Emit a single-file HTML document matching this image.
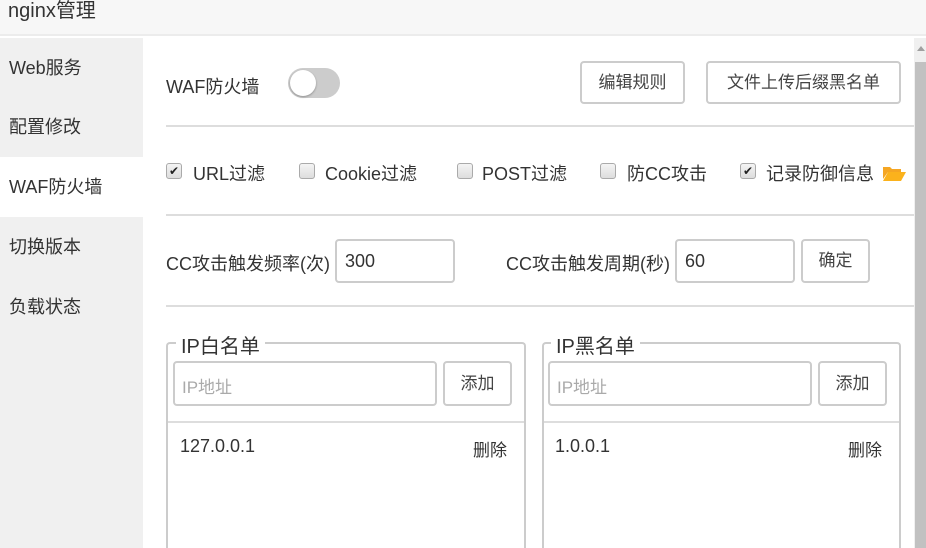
<!DOCTYPE html>
<html style="overflow:hidden;width:926px;height:548px"><head><meta charset="utf-8"><style>
*{margin:0;padding:0;box-sizing:border-box}
body{width:926px;height:548px;overflow:hidden;background:#fff;font-family:"Liberation Sans","Noto Sans CJK SC",sans-serif;color:#333;position:relative;font-size:17px}
.a{position:absolute;white-space:nowrap}
.hdr{left:0;top:0;width:926px;height:36px;background:#f7f7f7;border-bottom:2px solid #ececec}
.side{left:0;top:38px;width:143px;height:510px;background:#f0f0f0}
.si{left:0;width:143px;height:60px;line-height:60px;padding-left:9px;font-size:18px;color:#333}
.hr{left:166px;width:748px;height:2px;background:#ddd}
.btn{border:2px solid #ccc;border-radius:4px;background:#fff;text-align:center;font-size:17px;color:#444}
.cb{width:16px;height:16px;border:1px solid #aaa;border-radius:3px;background:linear-gradient(#f4f4f4,#ddd);font-size:12px;line-height:14px;text-align:center;color:#222}
.inp{border:2px solid #ccc;border-radius:4px;background:#fff}
.fs{border:2px solid #ccc;border-radius:4px 4px 0 0;border-bottom:none}
</style></head><body>
<div class="a hdr"></div>
<div class="a" style="left:8px;top:-6px;font-size:20px;color:#333">nginx管理</div>
<div class="a side"></div>
<div class="a si" style="top:38px">Web服务</div>
<div class="a si" style="top:97px">配置修改</div>
<div class="a si" style="top:157px;background:#fff">WAF防火墙</div>
<div class="a si" style="top:217px">切换版本</div>
<div class="a si" style="top:277px">负载状态</div>
<div class="a" style="left:914px;top:38px;width:12px;height:510px;background:#f0f0f0"></div>
<div class="a" style="left:915px;top:62px;width:11px;height:486px;background:#c1c1c1"></div>
<div class="a" style="left:917px;top:46px;width:0;height:0;border-left:4px solid transparent;border-right:4px solid transparent;border-bottom:5px solid #a0a0a0"></div>

<div class="a" style="left:166px;top:73px;font-size:18px">WAF防火墙</div>
<div class="a" style="left:288px;top:68px;width:52px;height:30px;border-radius:15px;background:#ccc"></div>
<div class="a" style="left:290px;top:70px;width:26px;height:26px;border-radius:13px;background:#fff;box-shadow:0 1px 2px rgba(0,0,0,.3)"></div>
<div class="a btn" style="left:580px;top:61px;width:105px;height:43px;line-height:39px">编辑规则</div>
<div class="a btn" style="left:706px;top:61px;width:195px;height:43px;line-height:39px">文件上传后缀黑名单</div>
<div class="a hr" style="top:125px"></div>

<div class="a cb" style="left:166px;top:163px">✔</div>
<div class="a" style="left:193px;top:160px;font-size:18px">URL过滤</div>
<div class="a cb" style="left:299px;top:163px"></div>
<div class="a" style="left:325px;top:160px;font-size:18px">Cookie过滤</div>
<div class="a cb" style="left:457px;top:163px"></div>
<div class="a" style="left:482px;top:160px;font-size:18px">POST过滤</div>
<div class="a cb" style="left:600px;top:163px"></div>
<div class="a" style="left:627px;top:160px;font-size:18px">防CC攻击</div>
<div class="a cb" style="left:740px;top:163px">✔</div>
<div class="a" style="left:766px;top:160px;font-size:18px">记录防御信息</div>
<svg class="a" style="left:882px;top:164px" width="24" height="18" viewBox="0 0 24 18"><path d="M1 3h7l2 2h9v3H6L1 15z" fill="#f5a623"/><path d="M6 8h18l-5 9H1z" fill="#fbb21c"/></svg>
<div class="a hr" style="top:214px"></div>

<div class="a" style="left:166px;top:250px;font-size:18px">CC攻击触发频率(次)</div>
<div class="a inp" style="left:335px;top:239px;width:120px;height:44px;padding:10px 8px;font-size:18px">300</div>
<div class="a" style="left:506px;top:250px;font-size:18px">CC攻击触发周期(秒)</div>
<div class="a inp" style="left:675px;top:239px;width:120px;height:44px;padding:10px 8px;font-size:18px">60</div>
<div class="a btn" style="left:801px;top:239px;width:69px;height:44px;line-height:40px">确定</div>
<div class="a hr" style="top:305px"></div>

<div class="a fs" style="left:166px;top:342px;width:360px;height:206px"></div>
<div class="a" style="left:176px;top:330px;background:#fff;padding:0 5px;font-size:20px">IP白名单</div>
<div class="a inp" style="left:173px;top:361px;width:264px;height:45px;padding:10px 7px;color:#aaa">IP地址</div>
<div class="a btn" style="left:443px;top:361px;width:69px;height:45px;line-height:41px">添加</div>
<div class="a" style="left:168px;top:421px;width:356px;height:2px;background:#ddd"></div>
<div class="a" style="left:180px;top:436px;font-size:18px">127.0.0.1</div>
<div class="a" style="left:473px;top:436px">删除</div>

<div class="a fs" style="left:542px;top:342px;width:359px;height:206px"></div>
<div class="a" style="left:551px;top:330px;background:#fff;padding:0 5px;font-size:20px">IP黑名单</div>
<div class="a inp" style="left:548px;top:361px;width:264px;height:45px;padding:10px 7px;color:#aaa">IP地址</div>
<div class="a btn" style="left:818px;top:361px;width:69px;height:45px;line-height:41px">添加</div>
<div class="a" style="left:544px;top:421px;width:355px;height:2px;background:#ddd"></div>
<div class="a" style="left:555px;top:436px;font-size:18px">1.0.0.1</div>
<div class="a" style="left:848px;top:436px">删除</div>
</body></html>
